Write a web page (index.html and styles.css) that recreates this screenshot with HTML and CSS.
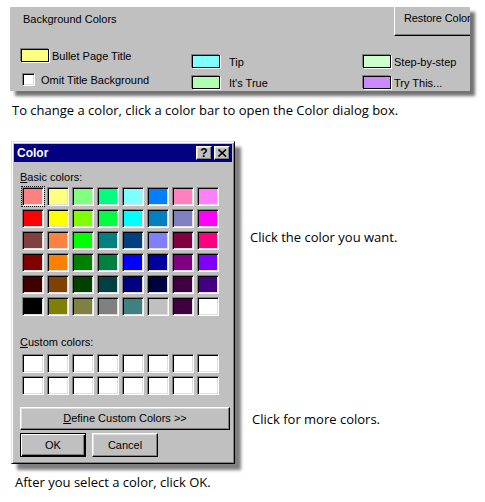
FILE: index.html
```html
<!DOCTYPE html>
<html>
<head>
<meta charset="utf-8">
<link rel="stylesheet" href="styles.css">
</head>
<body>
<div class="panel">
  <div class="panel-head">
    <span class="panel-title">Background Colors</span>
    <div class="restore">Restore Color</div>
  </div>
  <div class="panel-body">
    <div class="col col1">
      <div class="opt"><span class="sw" style="background:#ffff80"></span><span class="t1">Bullet Page Title</span></div>
      <div class="opt chk-row"><span class="chk"></span><span class="t-chk">Omit Title Background</span></div>
    </div>
    <div class="col col2">
      <div class="opt"><span class="sw" style="background:#80ffff"></span><span class="t2">Tip</span></div>
      <div class="opt"><span class="sw" style="background:#b0ffb0"></span><span class="t2">It's True</span></div>
    </div>
    <div class="col col3">
      <div class="opt"><span class="sw" style="background:#ccffcc"></span><span class="t1">Step-by-step</span></div>
      <div class="opt"><span class="sw" style="background:#cc88ff"></span><span class="t1">Try This...</span></div>
    </div>
  </div>
</div>
<p class="caption cap-top">To change a color, click a color bar to open the Color dialog box.</p>
<div class="demo">
  <div class="dialog">
    <div class="titlebar">
      <span class="title">Color</span>
      <div class="tbtns">
        <span class="tb q">?</span>
        <span class="tb"><svg width="9" height="8" viewBox="0 0 9 8"><path d="M0.5 0.5 L8 7.5 M8 0.5 L0.5 7.5" stroke="#000" stroke-width="1.6" fill="none"/></svg></span>
      </div>
    </div>
    <div class="dlg-body">
      <div class="lbl"><u>B</u>asic colors:</div>
      <div class="grid">
        <span class="cell focus" style="background:#ff8080"></span>
        <span class="cell" style="background:#ffff80"></span>
        <span class="cell" style="background:#80ff80"></span>
        <span class="cell" style="background:#00ff80"></span>
        <span class="cell" style="background:#80ffff"></span>
        <span class="cell" style="background:#0080ff"></span>
        <span class="cell" style="background:#ff80c0"></span>
        <span class="cell" style="background:#ff80ff"></span>
        <span class="cell" style="background:#ff0000"></span>
        <span class="cell" style="background:#ffff00"></span>
        <span class="cell" style="background:#80ff00"></span>
        <span class="cell" style="background:#00ff40"></span>
        <span class="cell" style="background:#00ffff"></span>
        <span class="cell" style="background:#0080c0"></span>
        <span class="cell" style="background:#8080c0"></span>
        <span class="cell" style="background:#ff00ff"></span>
        <span class="cell" style="background:#804040"></span>
        <span class="cell" style="background:#ff8040"></span>
        <span class="cell" style="background:#00ff00"></span>
        <span class="cell" style="background:#008080"></span>
        <span class="cell" style="background:#004080"></span>
        <span class="cell" style="background:#8080ff"></span>
        <span class="cell" style="background:#800040"></span>
        <span class="cell" style="background:#ff0080"></span>
        <span class="cell" style="background:#800000"></span>
        <span class="cell" style="background:#ff8000"></span>
        <span class="cell" style="background:#008000"></span>
        <span class="cell" style="background:#008040"></span>
        <span class="cell" style="background:#0000ff"></span>
        <span class="cell" style="background:#0000a0"></span>
        <span class="cell" style="background:#800080"></span>
        <span class="cell" style="background:#8000ff"></span>
        <span class="cell" style="background:#400000"></span>
        <span class="cell" style="background:#804000"></span>
        <span class="cell" style="background:#004000"></span>
        <span class="cell" style="background:#004040"></span>
        <span class="cell" style="background:#000080"></span>
        <span class="cell" style="background:#000040"></span>
        <span class="cell" style="background:#400040"></span>
        <span class="cell" style="background:#400080"></span>
        <span class="cell" style="background:#000000"></span>
        <span class="cell" style="background:#808000"></span>
        <span class="cell" style="background:#808040"></span>
        <span class="cell" style="background:#808080"></span>
        <span class="cell" style="background:#408080"></span>
        <span class="cell" style="background:#c0c0c0"></span>
        <span class="cell" style="background:#400040"></span>
        <span class="cell" style="background:#ffffff"></span>
      </div>
      <div class="lbl custom-lbl"><u>C</u>ustom colors:</div>
      <div class="grid custom">
        <span class="cell"></span><span class="cell"></span><span class="cell"></span><span class="cell"></span>
        <span class="cell"></span><span class="cell"></span><span class="cell"></span><span class="cell"></span>
        <span class="cell"></span><span class="cell"></span><span class="cell"></span><span class="cell"></span>
        <span class="cell"></span><span class="cell"></span><span class="cell"></span><span class="cell"></span>
      </div>
      <div class="btn define"><u>D</u>efine Custom Colors &gt;&gt;</div>
      <div class="btn-row">
        <div class="btn ok">OK</div>
        <div class="btn cancel">Cancel</div>
      </div>
    </div>
  </div>
  <div class="notes">
    <p class="note note1">Click the color you want.</p>
    <p class="note note2">Click for more colors.</p>
  </div>
</div>
<p class="caption cap-bottom">After you select a color, click OK.</p>
</body>
</html>
```
FILE: styles.css
```css
* { box-sizing: border-box; }
html, body { margin: 0; padding: 0; background: #fff; }
body {
  width: 485px;
  height: 502px;
  overflow: hidden;
  font-family: "Liberation Sans", Arial, sans-serif;
  font-size: 11px;
  color: #000;
}

/* ---------- top panel ---------- */
.panel {
  margin: 7px 0 0 10px;
  width: 460px;
  height: 84px;
  background: #c0c0c0;
  overflow: hidden;
  box-shadow: 5px 5px 3px rgba(0,0,0,0.55);
}
.panel-head {
  display: flex;
  justify-content: space-between;
  align-items: flex-start;
  height: 29px;
}
.panel-title {
  margin: 6px 0 0 13px;
  line-height: 13px;
}
.restore {
  width: 92px;
  height: 29px;
  margin-right: -16px;
  padding: 5px 0 0 9px;
  line-height: 13px;
  letter-spacing: -0.1px;
  white-space: nowrap;
  border-left: 1px solid #fff;
  border-bottom: 1px solid #000;
  box-shadow: inset 0 -1px #808080;
}
.panel-body {
  display: flex;
}
.col {
  display: flex;
  flex-direction: column;
}
.col1 { width: 171px; padding: 12px 0 0 11px; gap: 10px; }
.col2 { width: 171px; padding: 18px 0 0 11px; gap: 6px; }
.col3 { padding: 18px 0 0 11px; gap: 6px; }
.opt {
  display: flex;
  align-items: center;
  height: 15px;
  white-space: nowrap;
}
.sw {
  width: 28px;
  height: 13px;
  border: 1px solid #000;
  box-shadow: -1px -1px 0 #808080, 1px 1px 0 #fff;
  flex: none;
}
.t1 { margin-left: 3px; }
.t2 { margin-left: 9px; }
.chk-row { height: 13px; }
.chk {
  width: 13px;
  height: 13px;
  margin-left: 1px;
  background: #fff;
  border: 1px solid;
  border-color: #808080 #fff #fff #808080;
  box-shadow: inset 1px 1px #000, inset -1px -1px #dfdfdf;
  flex: none;
}
.t-chk { margin-left: 6px; }

/* ---------- captions ---------- */
.caption, .note {
  margin: 0;
  font-family: "Open Sans", "DejaVu Sans", sans-serif;
  font-size: 13px;
  line-height: 16px;
  white-space: nowrap;
}
.cap-top { margin: 11px 0 0 12px; }
.cap-bottom { margin: 10px 0 0 15px; }

/* ---------- dialog ---------- */
.demo {
  display: flex;
  margin: 23px 0 0 11px;
}
.dialog {
  width: 224px;
  height: 323px;
  background: #c0c0c0;
  border: 1px solid;
  border-color: #dfdfdf #000 #000 #dfdfdf;
  padding: 2px;
  box-shadow: inset 1px 1px #fff, inset -1px -1px #808080, 6px 6px 3px rgba(0,0,0,0.5);
  flex: none;
}
.titlebar {
  height: 18px;
  background: #000080;
  display: flex;
  align-items: center;
  justify-content: space-between;
  padding: 0 2px 0 3px;
}
.title {
  color: #fff;
  font-weight: bold;
  font-size: 12px;
  line-height: 14px;
}
.tbtns { display: flex; gap: 2px; }
.tb {
  width: 16px;
  height: 14px;
  background: #c0c0c0;
  border: 1px solid;
  border-color: #fff #000 #000 #fff;
  box-shadow: inset -1px -1px #808080, inset 1px 1px #dfdfdf;
  display: flex;
  align-items: center;
  justify-content: center;
}
.q {
  font-weight: bold;
  font-size: 12px;
  line-height: 12px;
}
.dlg-body {
  padding: 8px 0 4px 6px;
}
.lbl {
  line-height: 14px;
  height: 14px;
}
.grid {
  display: grid;
  grid-template-columns: repeat(8, 22px);
  grid-auto-rows: 19px;
  gap: 3px;
  margin: 3px 0 0 2px;
}
.cell {
  background: #fff;
  border: 1px solid;
  border-color: #808080 #fff #fff #808080;
  box-shadow: inset 1px 1px #000, inset -1px -1px #dfdfdf;
}
.focus { outline: 1px dotted #000; }
.custom-lbl { margin-top: 19px; }
.custom { margin-top: 5px; }
.btn {
  background: #c0c0c0;
  border: 1px solid;
  border-color: #fff #000 #000 #fff;
  box-shadow: inset -1px -1px #808080, inset 1px 1px #dfdfdf;
  display: flex;
  align-items: center;
  justify-content: center;
  line-height: 13px;
}
.define {
  width: 210px;
  height: 23px;
  margin-top: 12px;
}
.btn-row {
  display: flex;
  gap: 6px;
  margin-top: 3px;
}
.ok, .cancel { width: 66px; height: 24px; }
.ok {
  border: 1px solid #000;
  box-shadow: inset 1px 1px #fff, inset -1px -1px #000, inset -2px -2px #808080;
}

/* ---------- notes ---------- */
.notes {
  padding: 88px 0 0 15px;
  display: flex;
  flex-direction: column;
  gap: 166px;
}
.note2 { padding-left: 2px; }
```
